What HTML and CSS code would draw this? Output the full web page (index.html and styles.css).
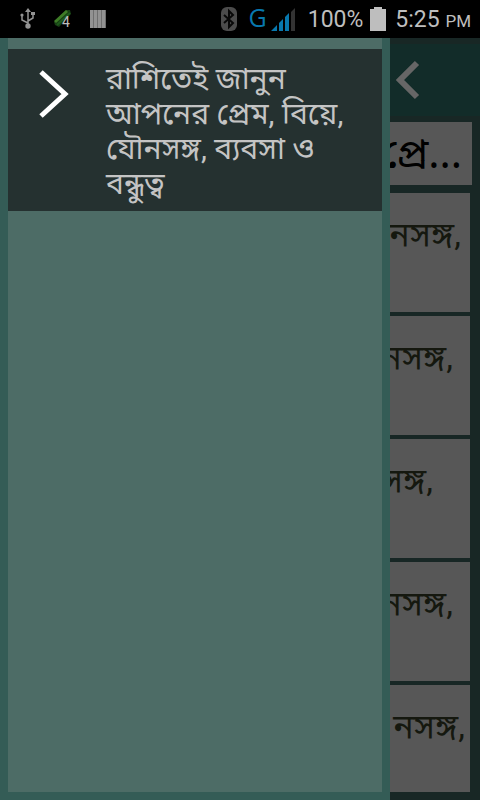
FILE: index.html
```html
<!DOCTYPE html>
<html lang="bn">
<head>
    <meta charset="UTF-8">
    <meta name="viewport" content="width=device-width, initial-scale=1.0">
    <title>রাশি</title>
    <link rel="stylesheet" href="styles.css">
</head>
<body>
    <div class="status-bar">
        <div class="status-left">
            <svg width="16" height="22" viewBox="0 0 16 22" fill="none" stroke="#929292" stroke-width="1.5">
                <path d="M8 3v14M8 15L2 12V8M8 13l5-3V6"/>
                <path d="M8 0l3 4H5z" fill="#929292" stroke="none"/>
                <circle cx="8" cy="18" r="2.700" fill="#929292" stroke="none"/>
                <circle cx="2" cy="7" r="1.600" fill="#929292" stroke="none"/>
                <path d="M11 4h4v3h-4z" fill="#929292" stroke="none"/>
            </svg>
            <svg class="battery-level" width="18" height="26" viewBox="0 -3 18 26">
                <path d="M0 13L12 1h4l1 4L5 18l-4-2z" fill="#173d14"/>
                <path d="M1 13L13 2" stroke="#3e7c27" stroke-width="3"/>
                <path d="M3 16L16 4" stroke="#1f5a1d" stroke-width="2"/>
                <text x="8" y="18" class="badge">4</text>
            </svg>
            <svg width="16" height="20" viewBox="0 0 16 20" fill="#929292">
                <path d="M0 1h16v18H0z" fill="#6e6e6e"/>
                <path d="M0 1h3v18H0zM4 1h3v18H4zM8 1h3v18H8zM12 1h3v18h-3z"/>
            </svg>
        </div>
        <div class="status-right">
            <svg width="16" height="24" viewBox="0 0 16 24" fill="none">
                <rect width="16" height="24" rx="6" fill="#4c4c4c"/>
                <path d="M3 8l9 8-4 4V4l4 4-9 8" stroke="#080808" stroke-width="2"/>
            </svg>
            <span class="network">G</span>
            <svg width="24" height="23" viewBox="0 0 24 23" fill="#0878ae">
                <path d="M0 23l6-6v6zM8 15l4-4v12H8zM14 9l4-4v18h-4z"/>
                <path d="M20 4l4-4v23h-4z" fill="#333"/>
            </svg>
            <span class="percent">100%</span>
            <svg width="16" height="24" viewBox="0 0 16 24" fill="#bebebe">
                <path d="M4 0h8v2h4v22H0V2h4z"/>
            </svg>
            <span class="clock">5:25 <small>PM</small></span>
        </div>
    </div>

    <div class="screen">
        <main class="page">
            <header class="app-bar">
                <button class="back" aria-label="Back">
                    <svg width="24" height="40" viewBox="0 0 24 40" fill="none" stroke="#666" stroke-width="6">
                        <path d="M21 3L4 20l17 17"/>
                    </svg>
                </button>
            </header>
            <h1 class="title">প্রে...</h1>
            <ul class="list">
                <li class="card">নসঙ্গ,</li>
                <li class="card medium">নসঙ্গ,</li>
                <li class="card short">নসঙ্গ,</li>
                <li class="card medium">নসঙ্গ,</li>
                <li class="card long">নসঙ্গ,</li>
            </ul>
        </main>

        <nav class="drawer">
            <a class="drawer-item" href="#">
                <svg width="30" height="50" viewBox="0 0 30 50" fill="none" stroke="#fff" stroke-width="5">
                    <path d="M2 3l24 22L2 47"/>
                </svg>
                <span>রাশিতেই জানুন আপনের প্রেম, বিয়ে, যৌনসঙ্গ, ব্যবসা ও বন্ধুত্ব</span>
            </a>
        </nav>
    </div>
</body>
</html>
```
FILE: styles.css
```css
* {
    box-sizing: border-box;
}
body {
    margin: 0;
    height: 100vh;
    display: flex;
    flex-direction: column;
    background: #182725;
    font-family: Roboto, "Noto Sans", "Noto Sans Bengali", sans-serif;
}
.status-bar {
    height: 38px;
    display: flex;
    justify-content: space-between;
    align-items: center;
    padding: 0 9px 0 20px;
    background: #000;
    color: #bebebe;
    font-size: 23px;
}
.status-left {
    display: flex;
    align-items: center;
    gap: 18px;
}
.status-right {
    display: flex;
    align-items: center;
}
.battery-level {
    overflow: visible;
}
.badge {
    fill: #bebebe;
    font-size: 14px;
}
.network {
    margin: 0 4px 0 12px;
    padding-bottom: 4px;
    color: #0878ae;
    font-family: "Open Sans", sans-serif;
    font-size: 25px;
    line-height: 30px;
}
.percent {
    margin: 0 7px 0 13px;
}
.clock {
    margin-left: 9px;
}
.clock small {
    font-size: 17px;
}
.screen {
    position: relative;
    flex: 1;
    min-height: 0;
}
.page {
    height: 100%;
    display: flex;
    flex-direction: column;
    padding: 6px 0 8px;
}
.app-bar {
    height: 72px;
    display: flex;
    justify-content: flex-end;
    align-items: center;
    padding-right: 60px;
    background: #122c29;
}
.back {
    display: flex;
    padding: 0;
    border: 0;
    background: none;
}
.title {
    height: 63px;
    margin: 6px 8px 8px;
    padding-right: 10px;
    overflow: hidden;
    background: #575757;
    color: #000;
    font-family: "Noto Sans", "Noto Sans Bengali", sans-serif;
    font-size: 42px;
    font-weight: 400;
    line-height: 60px;
    text-align: right;
}
.list {
    flex: 1;
    min-height: 0;
    margin: 0 10px;
    padding: 0;
    overflow: hidden;
    list-style: none;
}
.card {
    height: 119px;
    margin-bottom: 4px;
    padding: 24px 9px 0;
    background: #575757;
    color: #15180f;
    font-size: 34px;
    line-height: 35px;
    text-align: right;
}
.card.medium {
    padding-right: 17px;
}
.card.short {
    padding-right: 37px;
}
.card.long {
    padding-right: 5px;
}
.drawer {
    position: absolute;
    top: 0;
    bottom: 0;
    left: 0;
    width: 390px;
    max-width: 100%;
    padding-top: 11px;
    border: solid #345c56;
    border-width: 0 8px 8px;
    background: #4d6c66;
}
.drawer-item {
    display: flex;
    padding: 12px 32px 10px 31px;
    gap: 37px;
    background: #253130;
    color: #c4c4c4;
    font-size: 30px;
    line-height: 35px;
    text-decoration: none;
}
.drawer-item svg {
    flex: none;
    margin-top: 8px;
}
```
